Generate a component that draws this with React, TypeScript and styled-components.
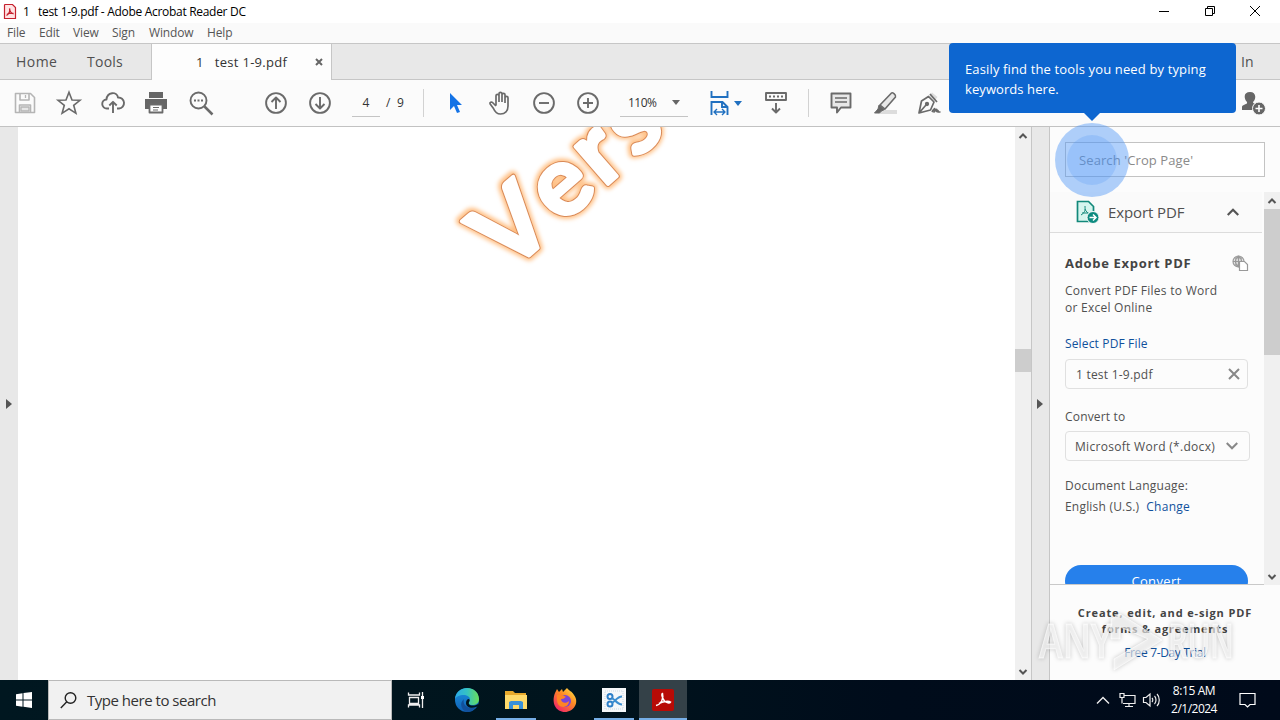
import React from "react";
import styled, { createGlobalStyle } from "styled-components";

const Global = createGlobalStyle`
  * { box-sizing: border-box; }
  body { margin: 0; overflow: hidden; font-family: "Open Sans", "Noto Sans", sans-serif; }
  svg { display: block; flex: none; overflow: visible; }
`;
const Text = styled.span<{ $size?: number; $color?: string; $ls?: number; $w?: number; $lh?: number; $drop?: number }>`
  font-size: ${(p) => p.$size ?? 13}px;
  color: ${(p) => p.$color ?? "#505050"};
  letter-spacing: ${(p) => p.$ls ?? 0}px;
  font-weight: ${(p) => p.$w ?? 400};
  line-height: ${(p) => (p.$lh ? p.$lh + "px" : "1.3")};
  padding-top: ${(p) => p.$drop ?? 0}px;
  white-space: pre;
`;
const Screen = styled.div`
  position: relative; width: 1280px; height: 720px; overflow: hidden;
  display: flex; flex-direction: column; background: #fff;
`;
const TitleBar = styled.header`
  height: 23px; display: flex; align-items: center; padding-left: 4px; gap: 7px; background: #fff;
`;
const WindowButtons = styled.div`
  margin-left: auto; display: flex; align-items: center; padding: 0 2px 2px 0;
`;
const WindowButton = styled.div`
  width: 45.5px; height: 20px; display: flex; justify-content: center; align-items: center;
`;
const MenuBar = styled.nav`
  height: 20px; background: #fafafa; display: flex; align-items: center;
`;
const MenuItem = styled.span<{ $width: number }>`
  width: ${(p) => p.$width}px; font-size: 12px; letter-spacing: -0.15px; color: #555; line-height: 20px;
`;
const TabBar = styled.div`
  height: 37px; background: #e8e8e8; border-top: 1px solid #c6c6c6; border-bottom: 1px solid #c6c6c6;
  display: flex; align-items: center;
`;
const Tab = styled.div<{ $width: number }>`
  width: ${(p) => p.$width}px; padding-left: 16px; display: flex;
`;
const ActiveTab = styled.div`
  width: 181px; height: 36px; align-self: flex-start; background: #fdfdfd; border: solid #c6c6c6; border-width: 0 1px;
  display: flex; align-items: center; padding: 0 8px 0 44px; justify-content: space-between;
`;
const SignIn = styled.div`
  margin-left: auto; padding-right: 26px; display: flex;
`;
const Toolbar = styled.div`
  height: 47px; background: #fbfbfb; border-bottom: 1px solid #c2c2c2; display: flex; align-items: center; padding-left: 3px;
`;
const Tool = styled.div<{ $width?: number }>`
  width: ${(p) => p.$width ?? 44}px; height: 46px; display: flex; align-items: center; justify-content: center; flex: none;
`;
const Gap = styled.div<{ $width: number }>`
  width: ${(p) => p.$width}px; flex: none;
`;
const Field = styled.div<{ $width: number }>`
  width: ${(p) => p.$width}px; height: 27px; border-bottom: 1px solid #c4c4c4; display: flex; align-items: center;
  justify-content: space-around; flex: none;
`;
const Rule = styled.div`
  width: 1px; height: 28px; background: #d2d2d2; flex: none;
`;
const FitMenuArrow = styled.svg`
  margin-left: -8px;
`;
const Workspace = styled.main`
  height: 553px; display: flex;
`;
const Rail = styled.div<{ $right?: boolean }>`
  width: ${(p) => (p.$right ? 19 : 18)}px; background: #e8e8e8; display: flex; align-items: center; justify-content: center;
  ${(p) => p.$right && "border: solid #c6c6c6; border-width: 0 1px; padding-right: 2px;"}
`;
const Page = styled.section`
  width: 997px; overflow: hidden; background: #fff;
`;
const ScrollBar = styled.div`
  width: 16px; background: #f0f0f0; display: flex; flex-direction: column; align-items: center;
  justify-content: space-between; padding: 5px 0 4px; flex: none;
`;
const Thumb = styled.div<{ $before: number; $height: number }>`
  width: 16px; height: ${(p) => p.$height}px; margin: ${(p) => p.$before}px 0 auto; background: #cdcdcd;
`;
const Panel = styled.aside`
  width: 230px; background: #fcfcfc; display: flex; flex-direction: column;
`;
const SearchArea = styled.div`
  height: 65px; padding: 15px 15px 0;
`;
const SearchInput = styled.div`
  height: 35px; border: 1px solid #c3c3c3; background: #fff; padding-left: 13px; display: flex; align-items: center;
`;
const PanelScroll = styled.div`
  height: 393px; display: flex;
`;
const PanelBody = styled.div`
  width: 214px; height: 393px; overflow: hidden; border-bottom: 1px solid #c9c9c9; flex: none;
`;
const ExportHeader = styled.div`
  height: 41px; width: 212px; border-bottom: 1px solid #dcdcdc; background: #fafafa; display: flex; align-items: center;
  padding: 0 23px 0 26px; gap: 9px;
  & > svg:last-child { margin-left: auto; }
`;
const ExportForm = styled.div`
  padding: 20px 14px 0 15px; display: flex; flex-direction: column; align-items: flex-start;
`;
const Row = styled.div`
  width: 184px; display: flex; align-items: center; justify-content: space-between;
`;
const Inline = styled.div`
  display: flex; gap: 7px; margin-top: 3px;
`;
const Block = styled.div<{ $top: number }>`
  display: flex; flex-direction: column; margin-top: ${(p) => p.$top}px;
`;
const Box = styled.div<{ $width: number; $top: number; $left: number; $right: number }>`
  width: ${(p) => p.$width}px; height: 30px; margin-top: ${(p) => p.$top}px; border: 1px solid #e0e0e0; border-radius: 4px;
  padding: 0 ${(p) => p.$right}px 0 ${(p) => p.$left}px; display: flex; align-items: center; justify-content: space-between;
`;
const ConvertButton = styled.div`
  width: 183px; height: 32px; margin-top: 49px; border-radius: 16px; background: #2680eb; display: flex; justify-content: center;
  align-items: center;
`;
const Promo = styled.div`
  height: 95px; display: flex; flex-direction: column; align-items: center; padding-top: 20px;
`;
const Taskbar = styled.footer`
  height: 40px; display: flex; background: linear-gradient(90deg, #001720, #00141d 45%, #000c1b 70%, #000a1a);
`;
const Start = styled.div`
  width: 48px; display: flex; align-items: center; justify-content: center;
`;
const TaskSearch = styled.div`
  width: 344px; background: #f1f1f1; border: 1px solid #b9b9b9; display: flex; align-items: center; padding-left: 11px; gap: 10px;
`;
const Tasks = styled.div`
  display: flex; align-items: center;
`;
const Task = styled.div<{ $active?: boolean; $open?: boolean; $width?: number; $after?: number }>`
  width: ${(p) => p.$width ?? 48}px; height: 40px; display: flex; align-items: center; justify-content: center;
  margin-right: ${(p) => p.$after ?? 5}px; background: ${(p) => (p.$active ? "#344148" : "transparent")};
  box-shadow: ${(p) => (p.$active || p.$open ? "inset 0 -2px #76aee6" : "none")};
`;
const Tray = styled.div`
  margin-left: auto; width: 190px; display: flex; align-items: center; padding-left: 7px;
`;
const Clock = styled.div`
  width: 60px; margin-left: 4px; display: flex; flex-direction: column; align-items: center;
`;
const Tip = styled.div`
  position: absolute; left: 949px; top: 43px; width: 287px; height: 70px; background: #0d66d0; border-radius: 4px;
  padding: 16px; display: flex; flex-direction: column;
  &::after { content: ""; position: absolute; left: 134px; top: 69px; border: solid transparent; border-width: 9px 9px 0; border-top-color: #0d66d0; }
`;
const Beacon = styled.div`
  position: absolute; left: 1055px; top: 123px; width: 74px; height: 74px; border-radius: 50%; background: rgba(75, 147, 247, 0.44);
  display: flex; align-items: center; justify-content: center;
  &::after { content: ""; width: 50px; height: 50px; border-radius: 50%; background: rgba(75, 147, 247, 0.22); }
`;
const Overlay = styled.svg<{ $x: number; $y: number }>`
  position: absolute; left: ${(p) => p.$x}px; top: ${(p) => p.$y}px;
  filter: drop-shadow(0 0 2px rgba(0, 0, 0, 0.3));
`;

const Chevron = ({ up = false, w = 8, sw = 2, color = "#555" }) => (
  <svg width={w} height={w} viewBox="0 0 8 8" fill="none" stroke={color} strokeWidth={(sw * 8) / w}>
    <path d={up ? "M0.5 6L4 2.5L7.5 6" : "M0.5 2L4 5.5L7.5 2"} />
  </svg>
);
const Icon = ({ children, color = "#6a6a6a", s = 24 }: { children: React.ReactNode; color?: string; s?: number }) => (
  <svg width={s} height={s} viewBox="0 0 24 24" fill="none" stroke={color} strokeWidth="1.9" strokeLinejoin="round">
    {children}
  </svg>
);

const Letters = () => (
  <svg width="997" height="553" viewBox="18 127 997 553">
    <defs>
      <filter id="glow" x="-20%" y="-20%" width="140%" height="140%"><feGaussianBlur stdDeviation="2" /></filter>
    </defs>
    <g transform="translate(508 274) rotate(-41)" fontFamily="Lato" fontWeight="700" fontSize="97" strokeLinejoin="round">
      {[
        { stroke: "#ffc084", strokeWidth: 10, fill: "none", filter: "url(#glow)" },
        { stroke: "#d98a58", strokeWidth: 5.5, fill: "none" },
        { stroke: "#fff", strokeWidth: 3.5, fill: "#fff" },
      ].map((layer, i) => (
        <text key={i} x="0" y="0" dx="0 12 5 7" dy="0 -2 -.3 -.4" {...layer}>Vers</text>
      ))}
    </g>
  </svg>
);

export default function App() {
  return (
    <>
      <Global />
      <Screen>
        <TitleBar>
          <svg width="12" height="15" viewBox="0 0 12 15">
            <path d="M1 .5h7.500l3 3v11H.5V1z" fill="#ffe4e4" stroke="#c5202e" strokeWidth="1.200" />
            <path d="M2.500 11.500C5 10 6 7 5.600 4.400M5.600 5c.5 3 2 4.400 4 4.800M3 10.300c2-1 4-1.300 6.500-1" fill="none" stroke="#c5202e" strokeWidth="1.300" />
          </svg>
          <Text $size={12} $color="#000" $ls={-0.300}>1   test 1-9.pdf - Adobe Acrobat Reader DC</Text>
          <WindowButtons>
            <WindowButton><svg width="10" height="10"><path d="M0 5.500h10" stroke="#000" /></svg></WindowButton>
            <WindowButton><svg width="10" height="10" fill="none" stroke="#000"><path d="M.5 2.500h7v7h-7zM2.500 2.500v-2h7v7h-2" /></svg></WindowButton>
            <WindowButton><svg width="10" height="10" stroke="#000"><path d="M0 0l10 10M10 0L0 10" /></svg></WindowButton>
          </WindowButtons>
        </TitleBar>
        <MenuBar>
          <Gap $width={7} />
          <MenuItem $width={32}>File</MenuItem><MenuItem $width={34}>Edit</MenuItem><MenuItem $width={39}>View</MenuItem>
          <MenuItem $width={37}>Sign</MenuItem><MenuItem $width={58}>Window</MenuItem><MenuItem $width={40}>Help</MenuItem>
        </MenuBar>
        <TabBar>
          <Tab $width={71}><Text $size={14} $ls={0.450} $drop={1}>Home</Text></Tab>
          <Tab $width={80}><Text $size={14} $ls={0.250} $drop={1}>Tools</Text></Tab>
          <ActiveTab>
            <Text $size={13} $ls={0.300} $color="#333">1   test 1-9.pdf</Text>
            <svg width="8" height="8" stroke="#666" strokeWidth="2"><path d="M1 1l6 6M7 1L1 7" /></svg>
          </ActiveTab>
          <SignIn><Text $size={14} $ls={0.300} $drop={1}>Sign In</Text></SignIn>
        </TabBar>
        <Toolbar>
          <Tool><Icon color="#b5b5b5"><path d="M2.500 2.500h15l4 4v15h-19zM7 3v6h9V3M6.500 21v-7h11v7" strokeWidth="1.600" /><path d="M12.500 4v3M8 16h8v4H8z" strokeWidth="1.300" fill="#e6e6e6" /></Icon></Tool>
          <Tool><Icon><path d="M12 1.300l3 7.700 8 .3-6.300 5 2.200 8-6.900-4.500-6.900 4.500 2.200-8L1 9.300l8-.3z" strokeWidth="1.600" strokeLinejoin="miter" /></Icon></Tool>
          <Tool><Icon><path d="M8 17.500H6a4.500 4.500 0 01-.5-9C6 1 16 0 17 6.500a5.500 5.500 0 011 11h-2M12 22V11M8.300 14.500L12 10.800l3.700 3.700" /></Icon></Tool>
          <Tool $width={42}><Icon><path d="M5 1h14v6H5zM1 8h22v10H1z" fill="#666" stroke="none" /><path d="M5.500 13.500h13v8h-13z" fill="#fff" strokeWidth="1.800" /><path d="M9 16.500h6M9 19h5" strokeWidth="1.200" /></Icon></Tool>
          <Tool $width={47}><Icon><circle cx="9.500" cy="9.500" r="8" /><path d="M15.500 15.500l8 8" strokeWidth="2.500" /><path d="M5 9.500h2M8.500 9.500h2M12 9.500h2" strokeWidth="2" /></Icon></Tool>
          <Gap $width={30} />
          <Tool><Icon><circle cx="12" cy="12" r="9.900" /><path d="M12 18V7M7.500 11L12 6.500l4.500 4.500" /></Icon></Tool>
          <Tool><Icon><circle cx="12" cy="12" r="9.900" /><path d="M12 6v11M7.500 13l4.500 4.500 4.500-4.500" /></Icon></Tool>
          <Gap $width={10} />
          <Field $width={28}><Text $size={12} $color="#333">4</Text></Field>
          <Gap $width={6} />
          <Text $size={12} $color="#333" $ls={0.150}>/  9</Text>
          <Gap $width={19} />
          <Rule />
          <Gap $width={10} />
          <Tool><svg width="14" height="20"><path d="M1 0v17l4-4 3 7 3-1-3-7h5z" fill="#1473e6" /></svg></Tool>
          <Tool><Icon><path d="M8 14.500V4.800a1.500 1.500 0 013 0V11M11 11V2.800a1.500 1.500 0 013 0V11M14 11V3.800a1.500 1.500 0 013 0V12M17 12V6.800a1.500 1.500 0 013 0V15c0 5-3 8-7.500 8-4 0-5.800-2.500-7-5.500L2 12.800c-.5-1.500 1.500-2.300 2.500-1.300L8 15" strokeWidth="1.700" /></Icon></Tool>
          <Tool><Icon><circle cx="12" cy="12" r="9.900" /><path d="M7 12h10" /></Icon></Tool>
          <Tool><Icon><circle cx="12" cy="12" r="9.900" /><path d="M7 12h10M12 7v10" /></Icon></Tool>
          <Gap $width={10} />
          <Field $width={68}>
            <Text $size={12} $color="#333" $ls={-0.500}>110%</Text>
            <svg width="8" height="5"><path d="M0 0h8L4 5z" fill="#666" /></svg>
          </Field>
          <Gap $width={10} />
          <Tool><Icon color="#2070c0"><path d="M3.500 0v6h16V0M3.500 24V11h11l5 5v8M14 11v5h5" strokeLinejoin="miter" /><path d="M6 21h11M9 18l-3 3 3 3M14 18l3 3-3 3" strokeWidth="1.400" /></Icon></Tool>
          <FitMenuArrow width="8" height="5"><path d="M0 0h8L4 5z" fill="#2070c0" /></FitMenuArrow>
          <Gap $width={12} />
          <Tool><Icon><path d="M2 2h20v7H2z" /><path d="M5 5.500h14" strokeWidth="2" strokeDasharray="2 2" /><path d="M12 12v9M8 17.500l4 4 4-4" /></Icon></Tool>
          <Gap $width={10} />
          <Rule />
          <Gap $width={10} />
          <Tool><Icon><path d="M2.500 2.500h19v14H12l-4 5v-5H2.500z" fill="#e8e8e8" /><path d="M6 7h12M6 11h12" strokeWidth="1.300" /></Icon></Tool>
          <Tool><Icon><path d="M10 19h14v4H5z" fill="#dcdcdc" stroke="none" /><path d="M18.500 2c1-1 5 2 4 4L12 18l-5-4z" fill="#e8e8e8" strokeWidth="1.600" /><path d="M6 14l5.500 4.500-3 1.500-2 2H1.500l3.500-4z" fill="#666" strokeWidth="1" /></Icon></Tool>
          <Tool $width={43}><Icon><path d="M15 1.500L20.500 6l-3 4L12 5z" fill="#ddd" stroke="none" /><path d="M2 22L4.500 10 11.500 5.500l5.500 5.500-3.500 8zM2 22l7-8M13 3l7 8M15 21c3-5 3.500-4 2 0 2.500-4 3.500-3 2.500-.5 1-1.500 2-1 1.500.5h2.500" strokeWidth="1.700" /><circle cx="10" cy="13" r="1.200" fill="#666" /></Icon></Tool>
          <Gap $width={281} />
          <Tool><Icon><path d="M9 1c7 0 6 8 3 10 0 2 4 2 4 4l-2 4H1v-3c0-3 6-2 5-5C3 8 2 1 9 1z" fill="#666" stroke="none" /><circle cx="18" cy="17.500" r="6.500" fill="#666" stroke="#fbfbfb" strokeWidth="1" /><path d="M14.500 17.500h7M18 14v7" stroke="#fff" strokeWidth="1.600" /></Icon></Tool>
        </Toolbar>
        <Workspace>
          <Rail><svg width="6" height="10"><path d="M0 0l6 5-6 5z" fill="#555" /></svg></Rail>
          <Page><Letters /></Page>
          <ScrollBar><Chevron up /><Thumb $before={209} $height={23} /><Chevron /></ScrollBar>
          <Rail $right><svg width="6" height="10"><path d="M0 0l6 5-6 5z" fill="#555" /></svg></Rail>
          <Panel>
            <SearchArea><SearchInput><Text $color="#8a8a8a" $ls={0.100} $drop={1}>Search 'Crop Page'</Text></SearchInput></SearchArea>
            <PanelScroll>
              <PanelBody>
                <ExportHeader>
                  <svg width="23" height="24" viewBox="0 0 23 24" fill="none">
                    <path d="M1.500 1.500h11l5 5v15h-16z" fill="#d5f5ee" stroke="#12887a" strokeWidth="1.700" />
                    <path d="M5 15c5-3 4-6 4-9M9 9c1 3 3 4 5 5M6 13h6" stroke="#12887a" /><circle cx="17" cy="17.500" r="6" fill="#0e8b80" stroke="#fafafa" />
                    <path d="M13.500 17.500h6M17 14.500l3 3-3 3" stroke="#fff" strokeWidth="1.500" />
                  </svg>
                  <Text $size={15} $ls={-0.100} $drop={1}>Export PDF</Text>
                  <Chevron up w={12} sw={2.200} />
                </ExportHeader>
                <ExportForm>
                  <Row>
                    <Text $size={13} $w={700} $ls={0.680} $lh={20} $color="#444">Adobe Export PDF</Text>
                    <svg width="17" height="17" fill="none" stroke="#999" strokeWidth="1.200"><circle cx="6.500" cy="6.500" r="5.500" fill="#e2e2e2" /><path d="M1 6.500h11M6.500 1v11M3 3h7M3 10h7M6.500 1c-4 3-4 8 0 11M6.500 1c4 3 4 8 0 11" /><path d="M7.500 6.500h5l3 3v6h-8z" fill="#fff" /></svg>
                  </Row>
                  <Block $top={9}><Text $size={12} $lh={17} $ls={0.280}>Convert PDF Files to Word</Text><Text $size={12} $lh={17} $ls={0.250}>or Excel Online</Text></Block>
                  <Block $top={19}><Text $size={12} $lh={17} $ls={0.150} $color="#10519c">Select PDF File</Text></Block>
                  <Box $width={183} $top={7} $left={10} $right={7}><Text $size={12} $ls={0.220} $drop={1}>1 test 1-9.pdf</Text><svg width="12" height="12" stroke="#888" strokeWidth="2"><path d="M1 1l10 10M11 1L1 11" /></svg></Box>
                  <Block $top={19}><Text $size={12} $lh={17} $ls={0.180}>Convert to</Text></Block>
                  <Box $width={185} $top={6} $left={9} $right={11}><Text $size={12} $ls={0.300} $drop={2}>Microsoft Word (*.docx)</Text><Chevron w={12} color="#888" /></Box>
                  <Block $top={16}><Text $size={12} $lh={17} $ls={0.240}>Document Language:</Text></Block>
                  <Inline><Text $size={12} $lh={19} $ls={0.200}>English (U.S.)</Text><Text $size={12} $lh={19} $ls={0.250} $color="#10519c">Change</Text></Inline>
                  <ConvertButton><Text $size={13} $color="#fff" $ls={0.350}>Convert</Text></ConvertButton>
                </ExportForm>
              </PanelBody>
              <ScrollBar><Chevron up /><Thumb $before={4} $height={146} /><Chevron /></ScrollBar>
            </PanelScroll>
            <Promo>
              <Text $size={11} $w={700} $lh={15.500} $ls={0.870} $color="#444">Create, edit, and e-sign PDF</Text>
              <Text $size={11} $w={700} $lh={15.500} $ls={0.800} $color="#444">forms &amp; agreements</Text>
              <Text $size={12} $lh={34} $ls={-0.350} $color="#10519c">Free 7-Day Trial</Text>
            </Promo>
          </Panel>
        </Workspace>
        <Taskbar>
          <Start><svg width="16" height="16" fill="#fff"><path d="M0 2.200L6.500 1.300V7.500H0zM7.500 1.100L16 0v7.500H7.500zM0 8.500h6.500v6.200L0 13.800zM7.500 8.500H16V16l-8.500-1.200z" /></svg></Start>
          <TaskSearch>
            <svg width="17" height="17" fill="none" stroke="#222" strokeWidth="1.400"><circle cx="10.500" cy="6" r="5.300" /><path d="M6.800 9.800L.8 16" /></svg>
            <Text $size={15} $color="#333" $ls={-0.480} $drop={1}>Type here to search</Text>
          </TaskSearch>
          <Tasks>
            <Task $after={3}><svg width="17" height="16" fill="none" stroke="#eee" strokeWidth="1.300"><path d="M.5 3V.5M.5.5V3h11V.5M1.500 5.500h9v6h-9zM.5 15.500V13h11v2.500M14.500 0v16" /><path d="M13 4h3v3h-3z" fill="#fff" stroke="none" /></svg></Task>
            <Task>
              <svg width="24" height="24" viewBox="0 0 24 24">
                <defs>
                  <linearGradient id="eg" x1="0" x2="1"><stop stopColor="#2aa9e8" /><stop offset=".5" stopColor="#35c3c3" /><stop offset="1" stopColor="#6ade58" /></linearGradient>
                  <linearGradient id="eb" x1="0" y1="0" x2="0" y2="1"><stop stopColor="#1a93df" /><stop offset="1" stopColor="#1060b5" /></linearGradient>
                </defs>
                <circle cx="12" cy="12" r="12" fill="url(#eb)" />
                <path d="M0 11C1-3 23-4 24 11c0 4-3 6-7 6-3 0-4-1-3-3 3-5-2-7-5-7-5 0-8 2-9 4z" fill="url(#eg)" />
                <path d="M9 11c-2 6 4 11 12 8-3 4-6 5-9 5-6-2-8-9-3-13z" fill="#12509b" />
                <path d="M14 11c2 2-1 3 0 5s6 2 9 0l1 2-3 1c-5 2-10 0-10-4 0-2 1-4 3-4z" fill="#00141d" />
              </svg>
            </Task>
            <Task $open $width={40}><svg width="22" height="19"><path d="M0 0h8l2 2h11v15H0z" fill="#e8a92c" /><path d="M0 4h22v14H0z" fill="#ffda6a" /><path d="M4 18v-7l2-1h10l2 1v7h-4v-4H8v4z" fill="#3a91d8" /></svg></Task>
            <Task>
              <svg width="24" height="24" viewBox="0 0 24 24">
                <defs><linearGradient id="ff" x1="1" y1="0" x2=".2" y2="1"><stop stopColor="#fff04a" /><stop offset=".45" stopColor="#ff8b24" /><stop offset="1" stopColor="#f0206a" /></linearGradient></defs>
                <path d="M2 5l2-4 2 3 3-3 1 3 4-4c2 3 5 3 7 7 6 8-1 17-9 17C3 24-2 15 2 5z" fill="url(#ff)" />
                <circle cx="12" cy="13" r="6" fill="#7b45d8" /><path d="M4 7c5-1 7 1 9 2-2 1-2 2-5 2 0 4 5 5 8 2 0 8-12 8-12-1z" fill="#ff8424" />
              </svg>
            </Task>
            <Task $open $width={40}>
              <svg width="24" height="24" fill="none"><path d="M0 0h24v24H0z" fill="#f6f8fa" /><path d="M3 3h18v18H3z" stroke="#cbd8e2" strokeDasharray="1 1" /><circle cx="8" cy="8.500" r="2.500" stroke="#2d7fc8" strokeWidth="2" /><circle cx="8" cy="16" r="2.500" stroke="#2d7fc8" strokeWidth="2" /><path d="M10 10l3 2.500c2 2 4 4 7 4M10 15l3-2.500c2-2 4-4 7-4" stroke="#3c8ed0" strokeWidth="2" /></svg>
            </Task>
            <Task $active><svg width="22" height="22" fill="none"><rect width="22" height="22" rx="2" fill="#b70b06" /><path d="M4 16.500c5-1 8-7 6.500-12-1 0-1 4 2 7.500 2 2 5 2.500 6 1-2-1.500-8-.5-11.500 1.500" stroke="#fff" strokeWidth="1.500" /></svg></Task>
          </Tasks>
          <Tray>
            <svg width="12" height="7" fill="none" stroke="#eee" strokeWidth="1.400"><path d="M0 6.500l6-6 6 6" /></svg>
            <Gap $width={10} />
            <svg width="17" height="14" fill="none" stroke="#eee" strokeWidth="1.200"><path d="M5 2.500h11v8H4M10 10.500v3M6 13.500h8M1 .5h4v4H1zM3 4.500v6" /></svg>
            <Gap $width={7} />
            <svg width="17" height="14" fill="none" stroke="#eee" strokeWidth="1.200"><path d="M.5 4.500h2.500L7 1v12L3 9.500H.5zM9 5c1 1 1 3 0 4M11.500 3c2 2 2 6 0 8M14 1c3 3 3 9 0 12" /></svg>
            <Clock><Text $size={12} $color="#fff" $lh={18} $ls={-0.400}>8:15 AM</Text><Text $size={12} $color="#fff" $lh={18} $ls={-0.500}>2/1/2024</Text></Clock>
            <Gap $width={15} />
            <svg width="17" height="15" fill="none" stroke="#fff" strokeWidth="1.200"><path d="M1 .5h15v11h-5L8.500 14 6 11.500H1z" /></svg>
          </Tray>
        </Taskbar>
        <Tip><Text $size={13} $lh={20} $color="#fff" $ls={0.140}>Easily find the tools you need by typing</Text><Text $size={13} $lh={20} $color="#fff" $ls={0.080}>keywords here.</Text></Tip>
        <Beacon />
        <Overlay $x={1030} $y={605} width="215" height="70" fontFamily="Open Sans" fontSize="47" fontWeight="600" fill="#fff" fillOpacity=".6" stroke="#fff" strokeOpacity=".6" strokeWidth="1">
          <text x="9" y="53" textLength="73" lengthAdjust="spacingAndGlyphs">ANY</text>
          <path d="M81 14l9-5 42 26-48 30v-11l34-20-28-12v12h-9z" />
          <text x="138" y="53" textLength="66" lengthAdjust="spacingAndGlyphs">RUN</text>
        </Overlay>
      </Screen>
    </>
  );
}
